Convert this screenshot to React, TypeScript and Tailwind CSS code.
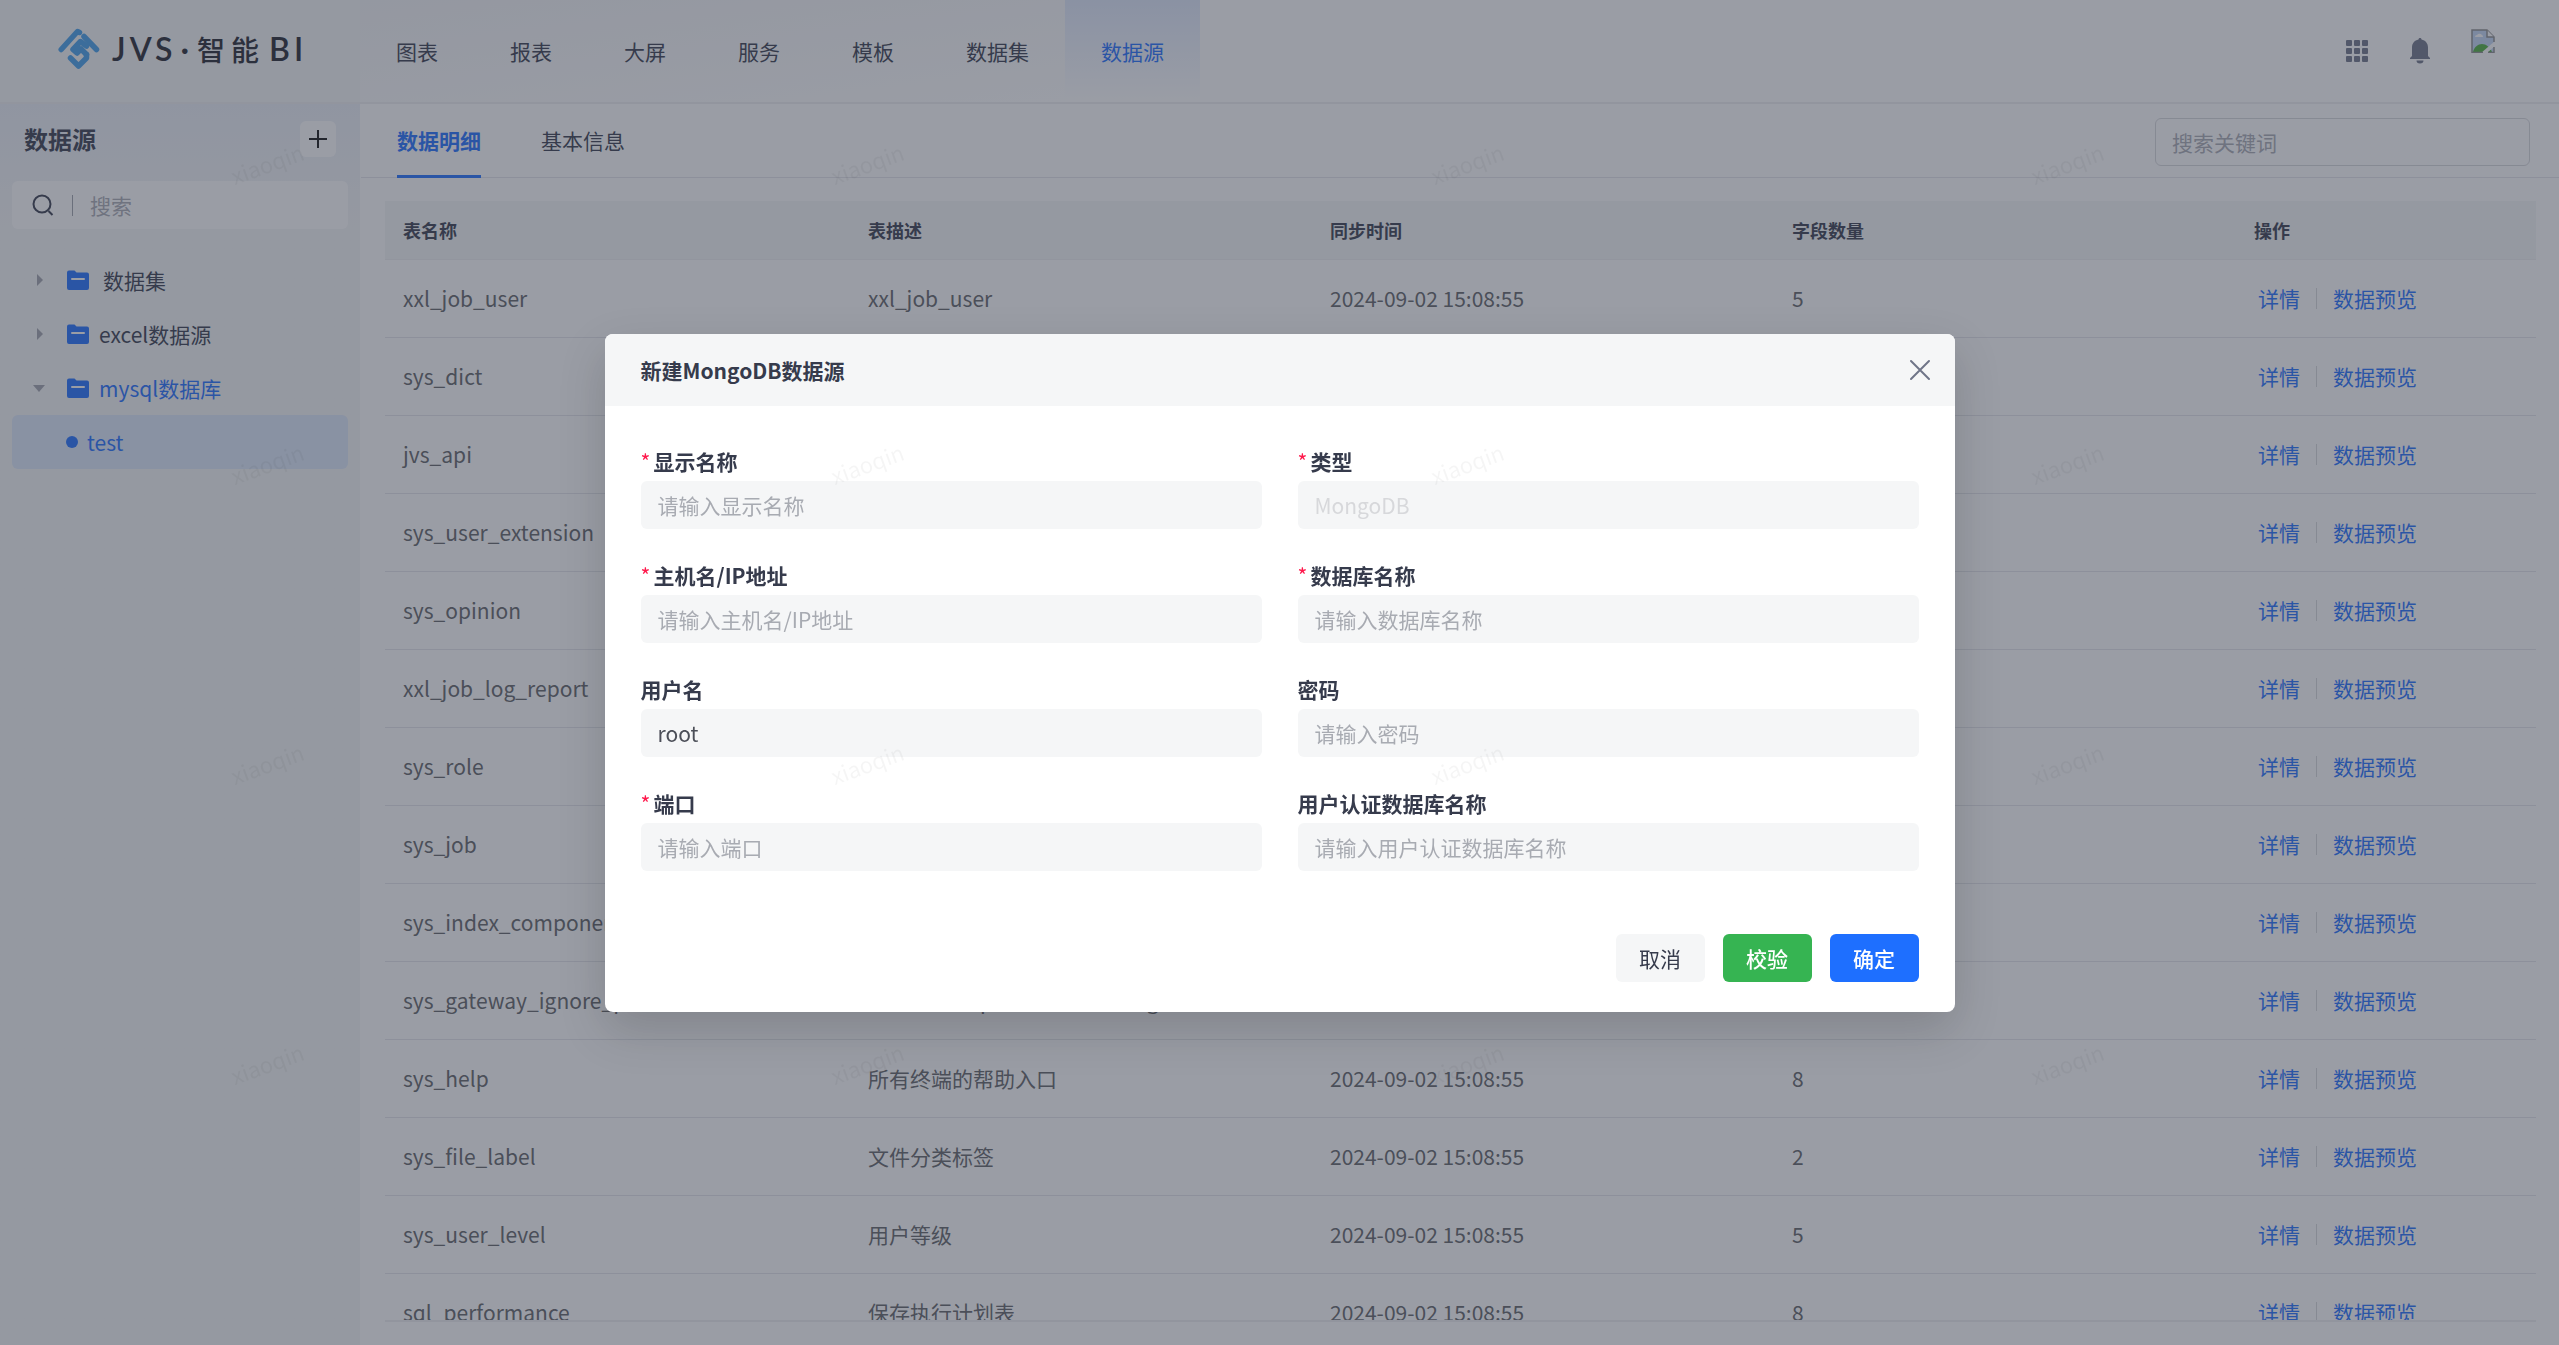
import React from 'react';

const navItems = ['图表', '报表', '大屏', '服务', '模板', '数据集', '数据源'];

const tree = [
  { label: '数据集', open: false, pad: 'ml-1' },
  { label: 'excel数据源', open: false, pad: '' },
  { label: 'mysql数据库', open: true, pad: '' },
];

const syncTime = '2024-09-02 15:08:55';

const rows = [
  { name: 'xxl_job_user', desc: 'xxl_job_user', count: 5 },
  { name: 'sys_dict', desc: '字典表', count: 9 },
  { name: 'jvs_api', desc: '接口信息', count: 12 },
  { name: 'sys_user_extension', desc: '用户扩展信息', count: 7 },
  { name: 'sys_opinion', desc: '意见反馈', count: 8 },
  { name: 'xxl_job_log_report', desc: 'xxl_job_log_report', count: 6 },
  { name: 'sys_role', desc: '角色', count: 10 },
  { name: 'sys_job', desc: '岗位', count: 6 },
  { name: 'sys_index_component', desc: '首页组件', count: 9 },
  { name: 'sys_gateway_ignore_path', desc: '网关忽略http请求路径的config', count: 4 },
  { name: 'sys_help', desc: '所有终端的帮助入口', count: 8 },
  { name: 'sys_file_label', desc: '文件分类标签', count: 2 },
  { name: 'sys_user_level', desc: '用户等级', count: 5 },
  { name: 'sql_performance', desc: '保存执行计划表', count: 8 },
];

const fields = [
  { id: 'displayName', label: '显示名称', required: true, placeholder: '请输入显示名称' },
  { id: 'type', label: '类型', required: true, value: 'MongoDB', disabled: true },
  { id: 'host', label: '主机名/IP地址', required: true, placeholder: '请输入主机名/IP地址' },
  { id: 'database', label: '数据库名称', required: true, placeholder: '请输入数据库名称' },
  { id: 'username', label: '用户名', value: 'root' },
  { id: 'password', label: '密码', placeholder: '请输入密码', type: 'password' },
  { id: 'port', label: '端口', required: true, placeholder: '请输入端口' },
  { id: 'authDatabase', label: '用户认证数据库名称', placeholder: '请输入用户认证数据库名称' },
];

function Logo() {
  return (
    <svg className="h-[42px] w-[42px]" viewBox="0 0 42 42" fill="none" stroke="#429eea" strokeWidth="5.500" strokeLinecap="round" strokeLinejoin="round">
      <path d="M3.200 21.500L19.500 3.500L21.500 4.500" />
      <path d="M26 8.500L38.500 21.500" />
      <path d="M28.500 18L22.500 13.500L15 21.500L19 25L23 21L28.500 26.500" />
      <path d="M12.500 30L20.500 38L28.500 30V26.500" />
    </svg>
  );
}

function FolderIcon() {
  return (
    <svg className="h-[21px] w-[22px] shrink-0" viewBox="0 0 22 21">
      <path d="M2 0.500h5.500l2 2H20a2 2 0 0 1 2 2V18a2 2 0 0 1-2 2H2a2 2 0 0 1-2-2V2.500a2 2 0 0 1 2-2z" fill="#1e6fff" />
      <path d="M5 9h12" stroke="#fff" strokeWidth="2" strokeLinecap="round" />
    </svg>
  );
}

function BrokenImage() {
  return (
    <svg className="mb-5 h-6 w-6" viewBox="0 0 24 24">
      <path d="M1 1h15l7 7v15H1z" fill="#c3d6f5" />
      <path d="M4 8a2 2 0 0 1 2-2 3 3 0 0 1 5 0 2 2 0 0 1 1 2z" fill="#fff" />
      <path d="M2 23c1-5 5-8 9-8s8 3 10 8z" fill="#4caf3c" />
      <path d="M24 12L10 24h6l8-7z" fill="#fff" />
      <path d="M12 23.500H1V1h15l7 7v5" fill="none" stroke="#8c8c8c" strokeWidth="1.500" />
      <path d="M16 1v7h7" fill="#fff" stroke="#8c8c8c" strokeWidth="1.500" />
      <path d="M17 23.500h6V18" fill="none" stroke="#8c8c8c" strokeWidth="1.500" />
    </svg>
  );
}

function Header() {
  return (
    <header className="flex h-[104px] shrink-0 justify-between border-b-2 border-[#eeeff0] bg-white">
      <div className="flex">
        <div className="flex w-[360px] shrink-0 items-center gap-3 bg-[#f5f6f7] pb-1 pl-[58px]">
          <Logo />
          <div className="flex items-baseline gap-1 font-['Lato','Noto_Sans_CJK_SC',sans-serif] text-[32px] leading-10 font-semibold tracking-[4px] text-[#23252f]">
            <span>JVS</span>
            <span>·</span>
            <span className="text-[28px] font-medium tracking-[6px]">智能</span>
            <span>BI</span>
          </div>
        </div>
        <nav className="flex bg-linear-to-br from-[#f3f4f6] to-white">
          {navItems.map((item) => (
            <a
              key={item}
              href="#"
              className={`flex items-center px-9 ${item === '数据源' ? 'bg-linear-to-b from-[#dfe8fb] to-white text-[#1e6fff]' : 'text-[#363b4c]'}`}
            >
              {item}
            </a>
          ))}
        </nav>
      </div>
      <div className="flex items-center gap-10 pr-16">
        <button aria-label="应用">
          <svg className="h-6 w-6" viewBox="0 0 24 24" fill="#6f7588">
            {[1, 9, 17].map((y) => [1, 9, 17].map((x) => <rect key={`${x}-${y}`} x={x} y={y} width="6" height="6" rx="1" />))}
          </svg>
        </button>
        <button aria-label="通知">
          <svg className="h-[26px] w-[22px]" viewBox="0 0 22 26" fill="#6f7588">
            <path d="M11 0c1 0 1.500.7 1.500 1.600C16.500 2.500 19 5.500 19 9.500V18l2 2v1H1v-1l2-2V9.500c0-4 2.500-7 6.500-7.900C9.500.7 10 0 11 0zM7.500 22.500h7a3.500 3 0 0 1-7 0z" />
          </svg>
        </button>
        <BrokenImage />
      </div>
    </header>
  );
}

function Sidebar() {
  return (
    <aside className="w-[360px] shrink-0 bg-linear-to-b from-[#ebeff7] to-[#f5f6f7] to-10% px-3 pt-4">
      <div className="flex items-center justify-between px-3">
        <h2 className="pt-px text-2xl leading-9 font-bold text-[#363b4c]">数据源</h2>
        <button aria-label="新增" className="flex h-9 w-9 items-center justify-center rounded-md bg-white">
          <svg className="h-[18px] w-[18px]" viewBox="0 0 18 18" stroke="#111" strokeWidth="2">
            <path d="M9 0v18M0 9h18" />
          </svg>
        </button>
      </div>
      <label className="mt-6 flex h-12 items-center rounded-md bg-white pl-5">
        <svg className="h-[22px] w-[22px]" viewBox="0 0 22 22" fill="none" stroke="#363b4c" strokeWidth="2">
          <circle cx="10" cy="10" r="8.500" />
          <path d="M16.500 17l4 4" />
        </svg>
        <span className="mx-[17px] ml-[18px] h-[21px] w-px bg-[#9fa2ab]" />
        <input aria-label="搜索" placeholder="搜索" className="w-48 bg-transparent outline-none placeholder:text-[#a8aab3]" />
      </label>
      <ul className="mt-6">
        {tree.map((node) => (
          <li key={node.label} className="flex h-[54px] items-center">
            <svg className="mr-[22px] ml-[21px] h-3 w-3" viewBox="0 0 12 12" fill="#a0a3ac">
              {node.open ? <path d="M0 3h12l-6 7z" /> : <path d="M4 0v12l6-6z" />}
            </svg>
            <FolderIcon />
            <span className={`pl-[10px] ${node.pad} ${node.open ? 'text-[#1e6fff]' : 'text-[#363b4c]'}`}>{node.label}</span>
          </li>
        ))}
        <li className="flex h-[54px] items-center gap-[9px] rounded-md bg-[#dde8fa] pl-[54px] text-[#1e6fff]">
          <span className="h-3 w-3 rounded-full bg-[#1e6fff]" />
          test
        </li>
      </ul>
    </aside>
  );
}

function Toolbar() {
  return (
    <div className="flex h-[74px] shrink-0 items-center justify-between border-b border-[#e4e5ea] pr-[29px] pl-9">
      <div className="flex h-full gap-[60px]">
        <button className="-mb-px border-b-[3px] border-[#1e6fff] font-bold text-[#1e6fff]">数据明细</button>
        <button className="-mb-px border-b-[3px] border-transparent text-[#363b4c]">基本信息</button>
      </div>
      <input
        aria-label="搜索关键词"
        placeholder="搜索关键词"
        className="mt-0.5 h-12 w-[375px] rounded-md border border-[#d7d8db] px-4 outline-none placeholder:text-[#a8aab3]"
      />
    </div>
  );
}

function DataTable() {
  return (
    <div className="mt-[23px] mr-[23px] mb-[23px] ml-6 min-h-0 flex-1 overflow-hidden border-b-2 border-[#eeeff0]">
      <table className="w-full table-fixed text-left">
        <thead className="bg-[#f5f6f7] text-lg text-[#363b4c]">
          <tr className="h-[58px] border-b border-[#eeeff0]">
            <th className="w-[465px] px-[18px] font-bold">表名称</th>
            <th className="px-[18px] font-bold">表描述</th>
            <th className="px-[18px] font-bold">同步时间</th>
            <th className="px-[18px] font-bold">字段数量</th>
            <th className="w-[300px] px-[18px] font-bold">操作</th>
          </tr>
        </thead>
        <tbody className="text-[#606266]">
          {rows.map((row) => (
            <tr key={row.name} className="h-[78px] border-b border-[#e4e5ea]">
              <td className="px-[18px]">{row.name}</td>
              <td className="px-[18px]">{row.desc}</td>
              <td className="px-[18px]">{syncTime}</td>
              <td className="px-[18px]">{row.count}</td>
              <td className="px-[22px]">
                <div className="flex items-center text-[#1e6fff]">
                  <a href="#">详情</a>
                  <span className="mx-4 h-[21px] w-px bg-[#d7d8db]" />
                  <a href="#">数据预览</a>
                </div>
              </td>
            </tr>
          ))}
        </tbody>
      </table>
    </div>
  );
}

function CreateDialog() {
  return (
    <div role="dialog" aria-label="新建MongoDB数据源" className="w-[1350px] overflow-hidden rounded-lg bg-white shadow-[0_18px_48px_rgba(0,0,0,0.16)]">
      <div className="flex h-[72px] items-center justify-between bg-[#f5f6f7] pr-6 pl-9">
        <h3 className="font-bold text-[#363b4c]">新建MongoDB数据源</h3>
        <button aria-label="关闭">
          <svg className="h-[22px] w-[22px]" viewBox="0 0 22 22" stroke="#6f7588" strokeWidth="2" strokeLinecap="round">
            <path d="M2 2l18 18M20 2L2 20" />
          </svg>
        </button>
      </div>
      <form className="px-9 pt-9 pb-[30px]">
        <div className="grid grid-cols-2 gap-x-9 gap-y-[27px]">
          {fields.map((field) => (
            <div key={field.id}>
              <label htmlFor={field.id} className="flex h-[39px] items-center font-bold text-[#363b4c]">
                {field.required && <span className="w-[13px] font-normal text-[#ff194c]">*</span>}
                {field.label}
              </label>
              <input
                id={field.id}
                type={field.type || 'text'}
                defaultValue={field.value}
                placeholder={field.placeholder}
                disabled={field.disabled}
                className="h-12 w-full rounded-md bg-[#f5f6f7] px-[17px] text-[#4c4f58] outline-none placeholder:text-[#a8abb2] disabled:text-[#d7d8db]"
              />
            </div>
          ))}
        </div>
        <div className="mt-[63px] flex justify-end gap-[18px]">
          <button type="button" className="h-12 w-[89px] rounded-md bg-[#f5f6f7] text-[#363b4c]">取消</button>
          <button type="button" className="h-12 w-[89px] rounded-md bg-[#36b452] font-medium text-white">校验</button>
          <button type="button" className="h-12 w-[89px] rounded-md bg-[#1e6fff] font-medium text-white">确定</button>
        </div>
      </form>
    </div>
  );
}

function Watermark() {
  return (
    <div aria-hidden="true" className="pointer-events-none fixed inset-0 grid auto-rows-[300px] grid-cols-[repeat(auto-fill,600px)] overflow-hidden">
      {Array.from({ length: 16 }, (_, i) => (
        <div key={i} className="pt-[147px] pl-[229px]">
          <span className="inline-block -rotate-20 text-[22px] text-black/4">xiaoqin</span>
        </div>
      ))}
    </div>
  );
}

export default function App() {
  return (
    <div className="flex h-screen flex-col overflow-hidden bg-white font-['Noto_Sans_CJK_SC',sans-serif] text-[21px] leading-8">
      <Header />
      <div className="flex min-h-0 flex-1">
        <Sidebar />
        <main className="flex min-w-0 flex-1 flex-col pl-px">
          <Toolbar />
          <DataTable />
        </main>
      </div>
      <div className="fixed inset-0 flex items-center justify-center bg-[#363b4c]/50">
        <CreateDialog />
      </div>
      <Watermark />
    </div>
  );
}
